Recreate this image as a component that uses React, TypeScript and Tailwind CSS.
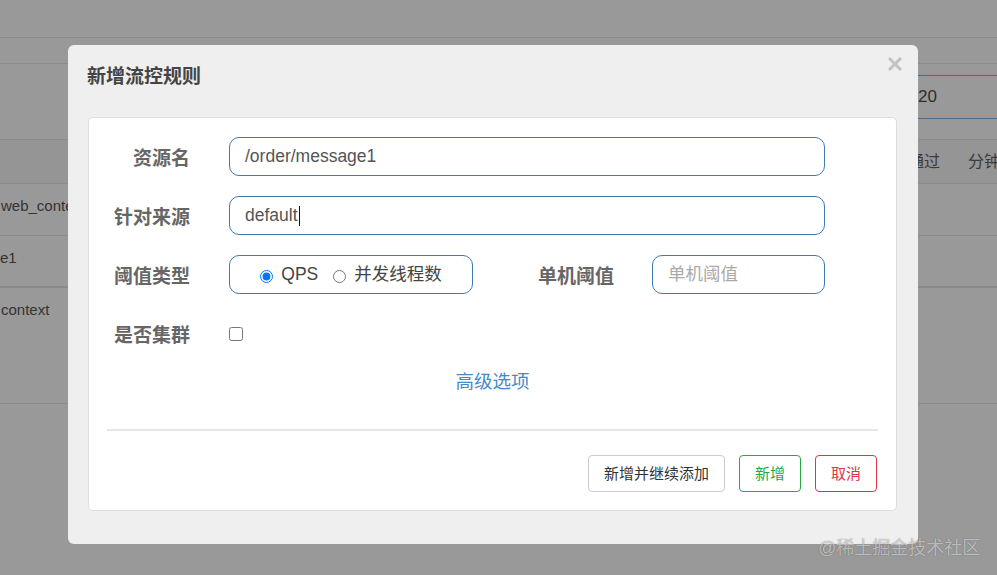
import type { ReactNode } from 'react';

const FONT = "font-['Liberation_Sans','Noto_Sans_CJK_SC',sans-serif]";

function Label({ children, className = 'w-[101px]' }: { children: ReactNode; className?: string }) {
  return (
    <div className={`${className} shrink-0 pt-1 text-right text-[19px] font-bold leading-[24px] text-[#666]`}>
      {children}
    </div>
  );
}

function TextBox({ children, className = 'w-[596px]' }: { children: ReactNode; className?: string }) {
  return (
    <div className={`${className} ml-[39px] flex h-[39px] items-center rounded-[10px] border border-[#3f7ab3] pl-[15px] text-[17.5px] text-[#555]`}>
      {children}
    </div>
  );
}

function BackgroundPage() {
  // the list page that sits behind the dialog, dimmed
  return (
    <div className="whitespace-nowrap text-[15px] text-[#333]">
      <div className="h-[38px] border-b border-[#8c8c8c]" />
      <div className="h-[26px] border-b border-[#8c8c8c]" />
      <div className="h-[76px] border-b border-[#8c8c8c] pt-[11px]">
        <div className="ml-[860px] flex h-[44px] items-center border-y border-[#4f6c8a] pl-[58px] text-[17px] text-[#2e2e2e]">
          20
        </div>
      </div>
      <div className="flex h-[44px] items-center border-b border-[#8c8c8c] bg-[#959595] text-[16px] text-[#3a3a3a]">
        <span className="ml-[908px] shrink-0">通过</span>
        <span className="ml-[28px] shrink-0">分钟</span>
      </div>
      <div className="h-[52px] border-b border-[#8c8c8c] pl-px pt-[11px] leading-[22px]">web_context</div>
      <div className="h-[52px] border-b-2 border-[#8a8a8a] pt-[11px] leading-[22px]">e1</div>
      <div className="h-[116px] border-b border-[#8c8c8c] pl-px pt-[11px] leading-[22px]">context</div>
    </div>
  );
}

function Dialog() {
  return (
    <div className="absolute left-[68px] top-[45px] h-[499px] w-[850px] rounded-[6px] bg-[#efefef] pl-[20px] pr-[21px] pt-[20px]">
      <div className="-ml-px h-[24px] text-[19px] font-bold leading-[24px] text-[#444]">新增流控规则</div>
      <button className="absolute right-[16px] top-[12px] flex h-[14px] w-[14px] items-center justify-center">
        <svg width="14" height="14" viewBox="0 0 14 14">
          <path d="M2 2 L12 12 M12 2 L2 12" stroke="#c2c2c2" strokeWidth="3" strokeLinecap="square" />
        </svg>
      </button>

      <div className="mt-[28px] h-[394px] rounded-[5px] border border-[#dedede] bg-white pt-[19px]">
        <div className="flex h-[39px] items-center">
          <Label>资源名</Label>
          <TextBox>/order/message1</TextBox>
        </div>

        <div className="mt-[20px] flex h-[39px] items-center">
          <Label>针对来源</Label>
          <TextBox>
            default
            <span className="ml-px inline-block h-[20px] w-px bg-[#111]" />
          </TextBox>
        </div>

        <div className="mt-[20px] flex h-[39px] items-center">
          <Label>阈值类型</Label>
          <div className="ml-[39px] flex h-[39px] w-[244px] items-center justify-center rounded-[10px] border border-[#3f7ab3] text-[17.5px] text-[#444]">
            <label className="flex items-center">
              <input type="radio" name="grade" defaultChecked className="m-0 mt-[3px] h-[13px] w-[13px]" />
              <span className="ml-[8px]">QPS</span>
            </label>
            <label className="ml-[15px] flex items-center">
              <input type="radio" name="grade" className="m-0 mt-[3px] h-[13px] w-[13px]" />
              <span className="ml-[8px]">并发线程数</span>
            </label>
          </div>
          <Label className="w-[141px]">单机阈值</Label>
          <div className="ml-[38px] flex h-[39px] w-[173px] items-center rounded-[10px] border border-[#3f7ab3] pl-[15px] text-[17.5px] text-[#aaa]">
            单机阈值
          </div>
        </div>

        <div className="mt-[20px] flex h-[40px] items-center">
          <Label>是否集群</Label>
          <input type="checkbox" className="m-0 ml-[39px] h-[14px] w-[14px]" />
        </div>

        <div className="mt-[16px] text-center text-[18.5px] leading-[24px] text-[#428bca]">高级选项</div>

        <div className="mx-[18px] mt-[35px] border-t-2 border-[#e6e6e6]" />

        <div className="mt-[24px] flex justify-end gap-[14px] pr-[19px] text-[15px] leading-[20px]">
          <button className="h-[37px] rounded-[4px] border border-[#ccc] bg-white px-[15px] text-[#333]">新增并继续添加</button>
          <button className="h-[37px] rounded-[4px] border border-[#28a745] bg-white px-[15px] text-[#28a745]">新增</button>
          <button className="h-[37px] rounded-[4px] border border-[#dc3545] bg-white px-[15px] text-[#dc3545]">取消</button>
        </div>
      </div>
    </div>
  );
}

export default function App() {
  return (
    <div className={`relative h-[575px] w-[997px] overflow-hidden bg-[#999] ${FONT}`}>
      <BackgroundPage />
      <Dialog />
      <div className="absolute left-[818px] top-[536px] text-[18px] leading-[24px] text-white/60 [text-shadow:0_0_1px_rgba(0,0,0,0.5)]">
        @稀土掘金技术社区
      </div>
    </div>
  );
}
